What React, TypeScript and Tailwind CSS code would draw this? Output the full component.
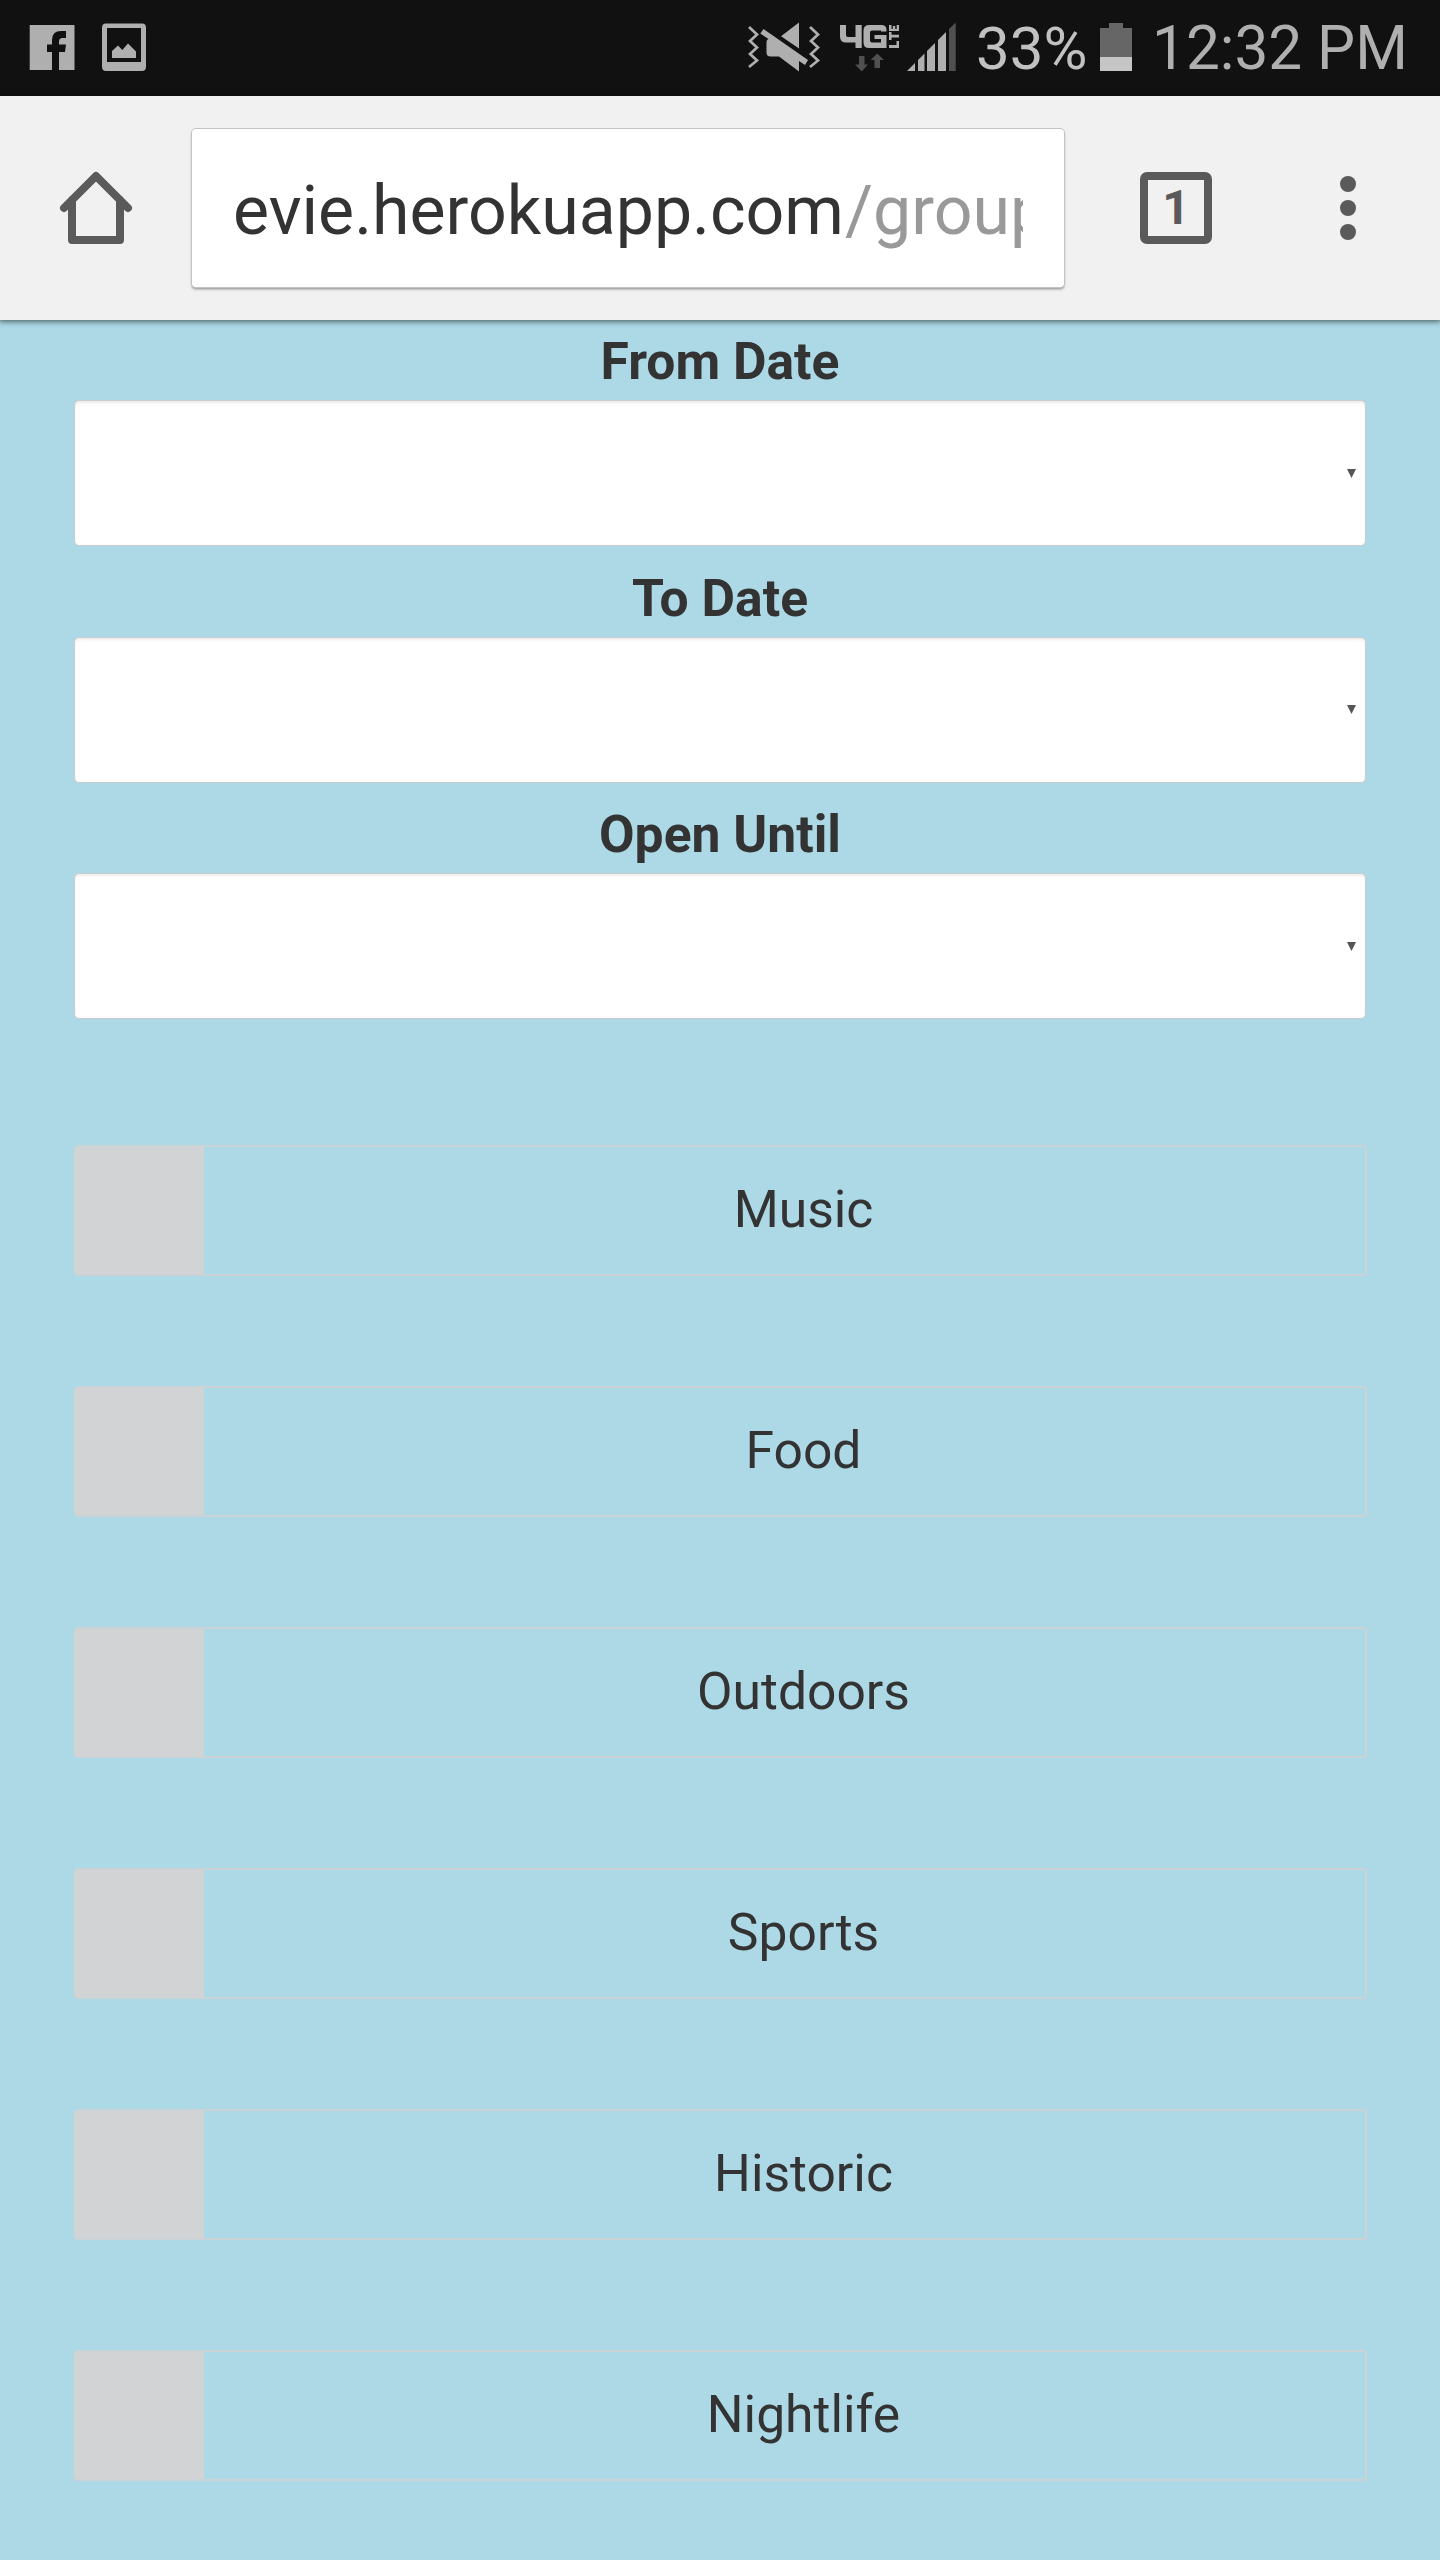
const DATES = ["From Date", "To Date", "Open Until"];
const TAGS = ["Music", "Food", "Outdoors", "Sports", "Historic", "Nightlife"];

function StatusBar() {
  return (
    <header className="flex h-24 items-center bg-[#111111] text-[60px] leading-none text-[#afafaf]">
      <svg className="ml-[29px] h-24 w-[46px] shrink-0" viewBox="29 0 46 96" fill="#afafaf">
        <path d="M29.700 25H74.500V70H59V52H65L66 44.500H59V41.500Q59 38 62.500 38H66V31H61Q52 31 52 40V44.500H47V52H52V70H29.700Z" />
      </svg>
      <svg className="ml-[26px] h-24 w-[46px] shrink-0" viewBox="101 0 46 96" fill="#afafaf">
        <path fillRule="evenodd" d="M106 23.500H142Q146 23.500 146 27.500V66.500Q146 71 142 71H106Q102 71 102 66.500V27.500Q102 23.500 106 23.500ZM107 28V62H141V28Z" />
        <path d="M112 58V51L118 45.500L122.300 50L128 43.500L136 51.500V58Z" />
      </svg>
      <svg className="ml-[600px] h-24 w-[216px] shrink-0" viewBox="747 0 216 96" fill="#afafaf">
        <path d="M749 27L757 34.500L750 41L757 47.500L750 54L757 60.500L749 67M810 27L818 34.500L811 41L818 47.500L811 54L818 60.500L810 67" fill="none" stroke="#afafaf" strokeWidth="2.700" />
        <path d="M799 22.500V48.500L781 36.300ZM763.500 29L808 60L805 65L799 61V71.500L779 56.500H770.500Q766.500 56.500 766.500 52.500V42Q766.500 39.500 768.500 39L760.300 33.500Z" />
        <path d="M840 25H846V35Q846 37 848 37H855.500V25H861.700V48H855.500V42.500H846Q840 42.500 840 36.500Z" />
        <path d="M869 25H881.500Q886.500 25 886.500 30V31.500H881V30.500H872Q870 30.500 870 32.500V40.500Q870 42.500 872 42.500H881V39H874.500V35H886.500V48H869Q863.500 48 863.500 42.500V30.500Q863.500 25 869 25Z" />
        <path d="M889 45H896.500V41H899V48H889ZM889 32H891.500V34.800H899V37.500H891.500V40H889ZM889 25H891.500V29H892.800V26H895.200V29H896.700V25H899V31H889Z" />
        <path d="M859 56H864.500V64.500H868L861.700 71.500L855 64.500H859ZM874.500 68V60H870.500L877.300 53.500L884 60H880V68Z" fill="#505050" />
        <path d="M907 71L915 63V71ZM918 71V60L924.500 53.500V71ZM927 71V51L935 43V71ZM938 71V40L946 32V71Z" />
        <path d="M949 71V29L955.700 22.500V71Z" fill="#505050" />
      </svg>
      <span className="ml-[13px] w-[120px] pt-[2px] whitespace-nowrap text-[#c1c1c1]">33%</span>
      <svg className="ml-[4px] h-24 w-[32px] shrink-0" viewBox="1100 0 32 96">
        <path d="M1100 28H1109V23H1123V28H1132V57H1100Z" fill="#666" />
        <path d="M1100 57H1132V71H1100Z" fill="#c5c5c5" />
      </svg>
      <span className="ml-[20px] pt-[2px] text-[60.300px] whitespace-nowrap">12:32 PM</span>
    </header>
  );
}

function BrowserBar() {
  return (
    <nav className="relative flex h-56 bg-[#f1f1f1] shadow-[0_1px_5px_1px_rgba(0,0,0,0.5)]">
      <svg className="mt-[72px] ml-[56px] h-20 w-20 shrink-0" viewBox="56 168 80 80" fill="none" stroke="#5a5a5a" strokeWidth="8" strokeLinecap="round" strokeLinejoin="round">
        <path d="M64 208L96 176L128 208M72 200V240H120V200" />
      </svg>
      <div className="mt-[33px] ml-[56px] h-[158px] w-[872px] rounded-[4px] bg-white px-[41px] shadow-[0_0_0_1px_#c4c4c4,0_2px_3px_rgba(0,0,0,0.45)]">
        <div className="overflow-hidden text-[68px] leading-[165px] whitespace-nowrap text-[#333]">
          evie.herokuapp.com<span className="ml-px text-[#999]">/group</span>
        </div>
      </div>
      <div className="mt-[76px] ml-[76px] flex h-[72px] w-[72px] items-center justify-center rounded-[7px] border-8 border-[#5a5a5a] text-[48px] leading-none font-bold text-[#5a5a5a]">
        1
      </div>
      <div className="mt-[80px] ml-[128px] flex flex-col gap-2">
        <i className="size-4 rounded-full bg-[#5a5a5a]" />
        <i className="size-4 rounded-full bg-[#5a5a5a]" />
        <i className="size-4 rounded-full bg-[#5a5a5a]" />
      </div>
    </nav>
  );
}

export default function App() {
  return (
    <div className="h-[2560px] w-[1440px] overflow-hidden bg-[#add8e6] font-['Roboto',sans-serif] text-[51.600px] text-[#333]">
      <StatusBar />
      <BrowserBar />
      <main className="px-[74px]">
        {DATES.map((label) => (
          <div key={label} className="h-[236.700px]">
            <div className="h-20 text-center leading-[84px] font-bold">{label}</div>
            <div className="flex h-[146px] items-center justify-end rounded-[5px] border border-[#ccc] bg-white pr-[9px] shadow-[inset_0_2px_3px_rgba(0,0,0,0.075)]">
              <svg className="h-[9px] w-[9px]" viewBox="0 0 9 9" fill="#555">
                <path d="M0 0H9L4.500 9Z" />
              </svg>
            </div>
          </div>
        ))}
        <div className="mt-[114.700px] -mr-px flex flex-col gap-[110px]">
          {TAGS.map((tag) => (
            <div key={tag} className="flex h-[131px] overflow-hidden rounded-[4px] border-y-2 border-r-2 border-[#ccd3d6]">
              <div className="-my-0.5 w-[130px] bg-[#d2d3d4]" />
              <div className="flex-1 pl-[38px] text-center leading-[126px]">{tag}</div>
            </div>
          ))}
        </div>
      </main>
    </div>
  );
}
